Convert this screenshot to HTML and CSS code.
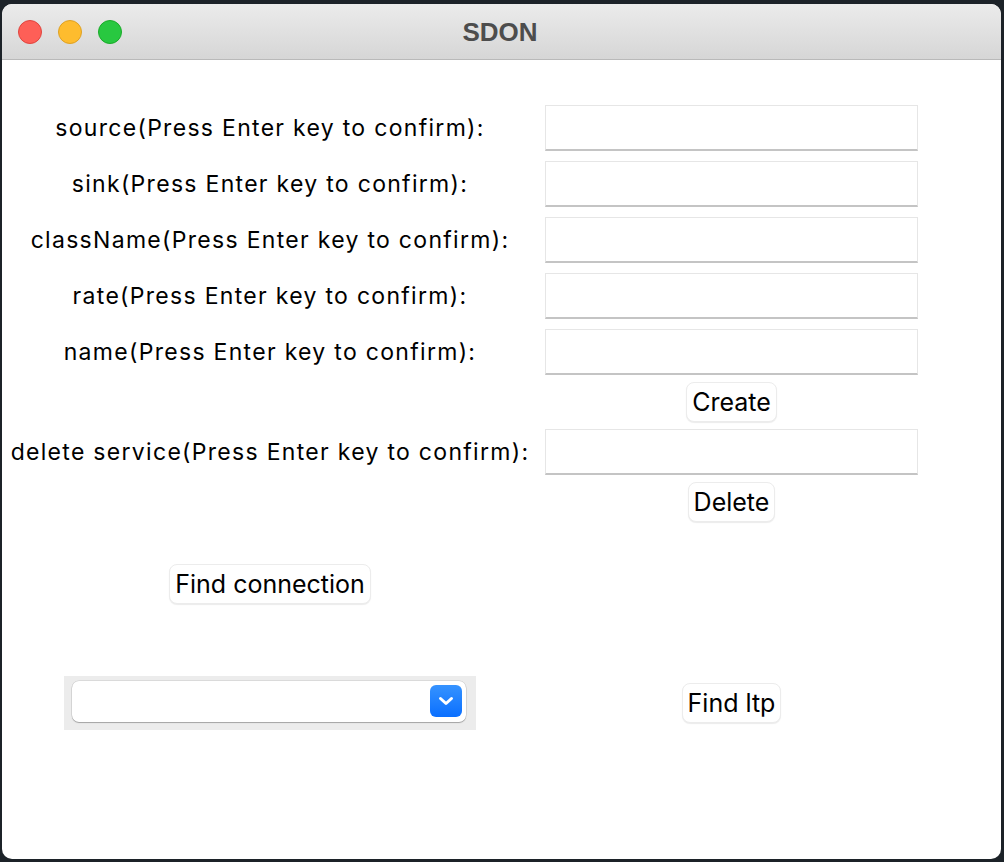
FILE: index.html
```html
<!DOCTYPE html>
<html>
<head>
<meta charset="utf-8">
<title>SDON</title>
<link rel="stylesheet" href="styles.css">
</head>
<body>
<div class="window">
  <div class="titlebar">
    <div class="lights">
      <span class="light red"></span>
      <span class="light yellow"></span>
      <span class="light green"></span>
    </div>
    <div class="title">SDON</div>
    <div></div>
  </div>
  <div class="content">
    <div class="row">
      <div class="label">source(Press Enter key to confirm):</div>
      <div class="field"></div>
    </div>
    <div class="row gap10">
      <div class="label">sink(Press Enter key to confirm):</div>
      <div class="field"></div>
    </div>
    <div class="row gap10">
      <div class="label">className(Press Enter key to confirm):</div>
      <div class="field"></div>
    </div>
    <div class="row gap10">
      <div class="label">rate(Press Enter key to confirm):</div>
      <div class="field"></div>
    </div>
    <div class="row gap10">
      <div class="label">name(Press Enter key to confirm):</div>
      <div class="field"></div>
    </div>
    <div class="row gap7">
      <div></div>
      <div class="cell"><button class="btn">Create</button></div>
    </div>
    <div class="row gap7">
      <div class="label">delete service(Press Enter key to confirm):</div>
      <div class="field"></div>
    </div>
    <div class="row gap7">
      <div></div>
      <div class="cell"><button class="btn">Delete</button></div>
    </div>
    <div class="row gap42">
      <div class="cell"><button class="btn">Find connection</button></div>
      <div></div>
    </div>
    <div class="row gap72">
      <div class="cell">
        <div class="combo">
          <div class="combo-inner">
            <span class="combo-arrow">
              <svg width="16" height="10" viewBox="0 0 16 10"><polyline points="2.5,2.5 8,7.5 13.5,2.5" fill="none" stroke="#fff" stroke-width="3" stroke-linecap="round" stroke-linejoin="round"/></svg>
            </span>
          </div>
        </div>
      </div>
      <div class="cell"><button class="btn">Find ltp</button></div>
    </div>
  </div>
</div>
</body>
</html>
```
FILE: styles.css
```css
html, body {
  margin: 0;
  padding: 0;
}
body {
  background: #1c2228;
  width: 1004px;
  height: 862px;
  overflow: hidden;
}
.window {
  margin: 4px 0 0 2px;
  width: 999px;
  height: 855px;
  background: #fff;
  border-radius: 10px;
  overflow: hidden;
}
.titlebar {
  height: 55px;
  border-bottom: 1px solid #b9b9b9;
  background: linear-gradient(#ebebeb, #d6d6d6);
  display: grid;
  grid-template-columns: 1fr auto 1fr;
  align-items: center;
}
.lights {
  display: flex;
  gap: 16px;
  padding-left: 16px;
}
.light {
  width: 24px;
  height: 24px;
  border-radius: 50%;
  box-sizing: border-box;
}
.red { background: #fe5f57; border: 1px solid #e0443e; }
.yellow { background: #febc2e; border: 1px solid #dea123; }
.green { background: #28c840; border: 1px solid #1aab29; }
.title {
  font-family: "Liberation Sans", Arial, sans-serif;
  font-weight: bold;
  font-size: 26px;
  color: #4d4d4d;
  padding-top: 1px;
  margin-left: -3px;
}
.content {
  padding-top: 45px;
  display: flex;
  flex-direction: column;
}
.row {
  display: grid;
  grid-template-columns: 536px 373px;
  column-gap: 7px;
  align-items: center;
}
.gap10 { margin-top: 10px; }
.gap7 { margin-top: 7px; }
.gap42 { margin-top: 42px; }
.gap72 { margin-top: 72px; }
.label {
  font-family: Inter, "Noto Sans", sans-serif;
  font-size: 23px;
  letter-spacing: 1.3px;
  color: #000;
  text-align: center;
  white-space: nowrap;
}
.field {
  height: 46px;
  box-sizing: border-box;
  background: #fff;
  border: 1px solid #e6e6e6;
  border-bottom: 2px solid #c4c4c4;
}
.cell {
  display: flex;
  justify-content: center;
  align-items: center;
}
.btn {
  font-family: Inter, "Noto Sans", sans-serif;
  font-size: 25px;
  color: #000;
  height: 40px;
  padding: 0 5px;
  background: #fff;
  border: 1px solid #ececec;
  border-radius: 8px;
  box-shadow: 0 1px 1px rgba(0, 0, 0, 0.08);
  line-height: 38px;
}
.combo {
  width: 412px;
  height: 54px;
  box-sizing: border-box;
  background: #ececec;
  padding: 5px 10px 8px 8px;
}
.combo-inner {
  height: 41px;
  background: #fff;
  border-radius: 7px;
  box-shadow: 0 0 0 0.5px rgba(0, 0, 0, 0.15), 0 1px 1px rgba(0, 0, 0, 0.25);
  display: flex;
  justify-content: flex-end;
  align-items: flex-start;
  padding: 4px 4px 0 0;
  box-sizing: border-box;
}
.combo-arrow {
  width: 32px;
  height: 32px;
  border-radius: 6px;
  background: linear-gradient(#3693ff, #0a6fff);
  display: flex;
  justify-content: center;
  align-items: center;
}
```
